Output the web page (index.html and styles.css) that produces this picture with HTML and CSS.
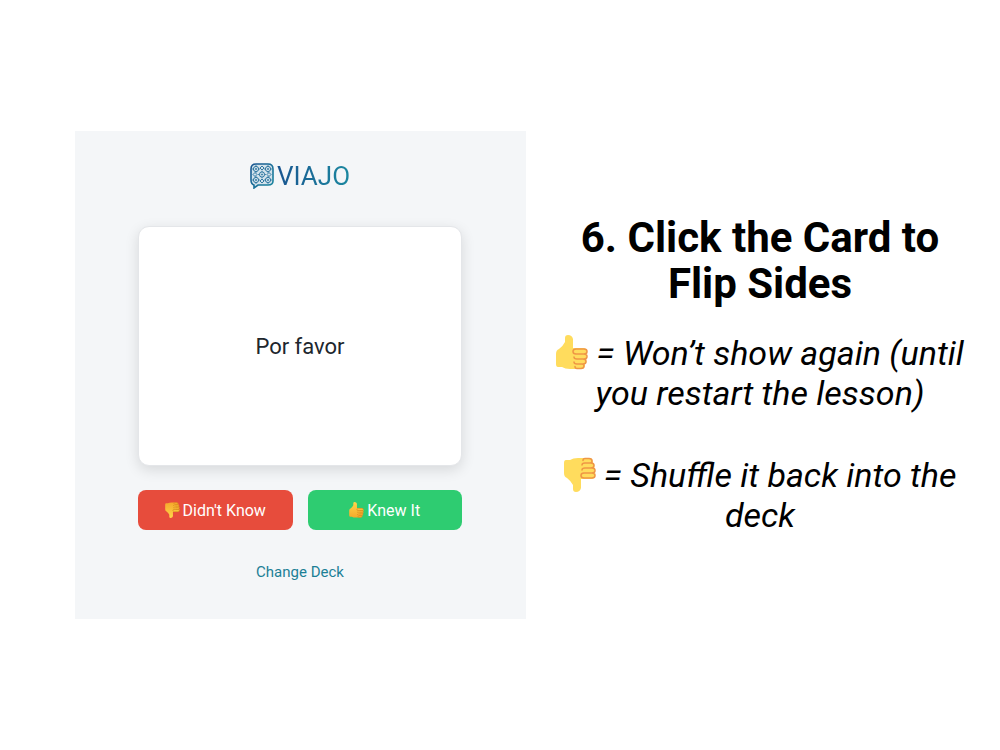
FILE: index.html
```html
<!DOCTYPE html>
<html lang="en">
<head>
<meta charset="utf-8">
<meta name="viewport" content="width=device-width, initial-scale=1">
<title>Viajo – Flashcards</title>
<link rel="stylesheet" href="styles.css">
</head>
<body>
<svg class="defs" aria-hidden="true">
  <defs>
    <linearGradient id="brand" x1="0" x2="1" y1="0" y2="1"><stop offset="0" stop-color="#195590"/><stop offset="1" stop-color="#1b88a0"/></linearGradient>
    <linearGradient id="gold" x1="0" x2="0" y1="0" y2="1"><stop offset="0" stop-color="#ffd54a"/><stop offset="1" stop-color="#f5a92c"/></linearGradient>
    <symbol id="thumb" viewBox="0 0 32 35">
      <path d="M0 19Q0 15 3 14Q7 11 9 7V3Q9 0 12 0Q16 0 17 4V13H27Q31 13 31 17Q32 19 30 21Q32 23 30 25Q31 28 29 29Q29 34 25 34H14Q9 34 6 32H2Q0 32 0 29Z"/>
      <path class="fingers" d="M21 19H20Q17 19 17 16.500Q17 14 20 14H28Q31 14 31 16.500Q31 19 28 19H21M24 19H28Q31 19 31 21.500Q31 24 28 24H21Q18 24 18 22M24 24H27Q30 24 30 26.500Q30 29 27 29H21Q18 29 18 27M23 29H26Q28 29 28 31Q28 33.500 25 33.500H21Q19 33.500 19 31.500"/>
    </symbol>
    <g id="tile"><circle r="2.6"/><circle r=".6"/><path d="M0-3.8V-2.6M0 3.8V2.6M-3.8 0H-2.6M3.8 0H2.6"/></g>
  </defs>
</svg>
<main class="slide">
  <section class="app">
    <div class="brand">
      <svg class="logo" viewBox="0 0 24 26" aria-hidden="true">
        <path fill="#d3e2eb" stroke="url(#brand)" stroke-width="1.6" d="M6 1H18Q23 1 23 6V18Q23 22 18 22H8L4 25V22Q1 21 1 17V6Q1 1 6 1Z"/>
        <g fill="none" stroke="#1e6c99" stroke-width=".9">
          <use href="#tile" x="12" y="11.5"/>
          <use href="#tile" x="6" y="6"/><use href="#tile" x="18" y="6"/>
          <use href="#tile" x="6" y="17"/><use href="#tile" x="18" y="17"/>
          <path d="M12 3L14 5L12 7L10 5ZM12 16L14 18L12 20L10 18ZM5 9.500L7 11.500L5 13.500L3 11.500ZM19 9.500L21 11.500L19 13.500L17 11.500Z"/>
        </g>
      </svg>
      <span class="wordmark">VIAJO</span>
    </div>
    <button class="card" type="button">Por favor</button>
    <div class="actions">
      <button class="answer miss" type="button"><svg class="mini down" aria-hidden="true"><use href="#thumb"/></svg>Didn't Know</button>
      <button class="answer hit" type="button"><svg class="mini" aria-hidden="true"><use href="#thumb"/></svg>Knew It</button>
    </div>
    <a class="change" href="#">Change Deck</a>
  </section>
  <section class="guide">
    <h1>6. Click the Card to Flip Sides</h1>
    <p><svg class="hand" role="img" aria-label="Thumbs up"><use href="#thumb"/></svg> = Won’t show again (until you restart the lesson)</p>
    <p><svg class="hand down" role="img" aria-label="Thumbs down"><use href="#thumb"/></svg> = Shuffle it back into the deck</p>
  </section>
</main>
</body>
</html>
```
FILE: styles.css
```css
* { box-sizing: border-box; }
body {
  margin: 0;
  background: #fff;
  color: #000;
  font-family: Roboto, "Liberation Sans", sans-serif;
}
.defs { position: absolute; width: 0; height: 0; }
.slide {
  min-height: 100vh;
  display: grid;
  grid-template-columns: 451fr 424fr;
  gap: 22px;
  align-items: center;
  padding: 0 28px 0 75px;
}
.app {
  display: flex;
  flex-direction: column;
  align-items: center;
  padding: 30px 64px 37px 63px;
  background: #f4f6f8;
}
.brand { display: flex; align-items: center; gap: 3px; height: 30px; }
.logo { width: 24px; height: 26px; }
.wordmark {
  font-size: 26px;
  line-height: 30px;
  background: linear-gradient(90deg, #195590, #1b88a0);
  background-clip: text;
  -webkit-background-clip: text;
  color: transparent;
}
.card {
  width: 100%;
  height: 240px;
  margin: 35px 0 24px;
  border: 1px solid #e4e6e9;
  border-radius: 11px;
  background: #fff;
  box-shadow: 0 4px 14px rgba(0, 0, 0, .12);
  color: #20262d;
  font: 22px Roboto, sans-serif;
  cursor: pointer;
}
.actions { display: grid; grid-template-columns: 1fr 1fr; gap: 15px; width: 100%; }
.answer {
  display: flex;
  align-items: center;
  justify-content: center;
  gap: 3px;
  height: 40px;
  padding: 0;
  border: 0;
  border-radius: 8px;
  color: #fff;
  font: 16px Roboto, sans-serif;
  cursor: pointer;
}
.miss { background: #e74c3c; }
.hit { background: #2ecc71; }
.mini { width: 15px; height: 16px; fill: url(#gold); stroke: #d98b1f; }
.change {
  margin-top: 32px;
  color: #1b8096;
  font-size: 15px;
  line-height: 20px;
  text-decoration: none;
}
.guide { text-align: center; }
h1 { margin: 0 0 26px; font-size: 42px; line-height: 46px; font-weight: 700; }
.guide p { margin: 0; font-size: 34px; line-height: 40px; font-style: italic; }
.guide p + p { margin-top: 42px; }
.hand { width: 32px; height: 35px; vertical-align: -5px; fill: #ffdc5d; stroke: #ef9645; }
.down { transform: scaleY(-1); }
.fingers { fill: none; stroke-width: 1.5; stroke-linecap: round; }
#thumb path:first-child { stroke: none; }
```
